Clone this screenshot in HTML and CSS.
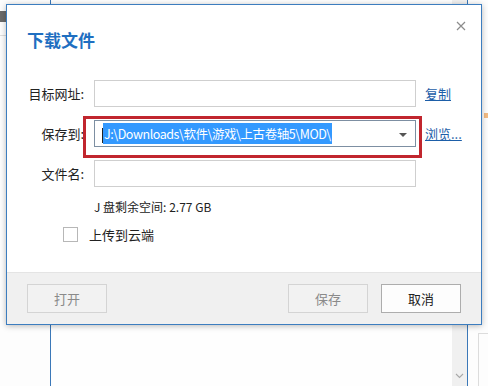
FILE: index.html
```html
<!DOCTYPE html>
<html lang="zh-CN">
<head>
<meta charset="utf-8">
<link rel="stylesheet" href="styles.css">
</head>
<body>
<div class="desk">
  <div class="side-strip"></div>
  <div class="side-line"></div>
  <div class="back-window">
    <div class="back-scroll">
      <svg class="chev" width="9" height="6" viewBox="0 0 9 6"><path d="M1 1 L4.5 4.5 L8 1" stroke="#a8a8a8" stroke-width="1.1" fill="none"/></svg>
    </div>
  </div>
  <div class="right-line-h"></div>
  <div class="right-line-v"></div>
  <div class="orange-mark"></div>

  <div class="dialog">
    <div class="dlg-title">下载文件</div>
    <svg class="close" width="10" height="10" viewBox="0 0 10 10"><path d="M1 1 L9 9 M9 1 L1 9" stroke="#8c8c8c" stroke-width="1.2" fill="none"/></svg>

    <div class="form">
      <div class="row">
        <label class="lbl">目标网址:</label>
        <div class="field"></div>
        <a class="link">复制</a>
      </div>
      <div class="row">
        <label class="lbl">保存到:</label>
        <div class="field combo">
          <span class="caret"></span><span class="sel">J:\Downloads\软件\游戏\上古卷轴5\MOD\</span>
          <span class="arrow"></span>
        </div>
        <a class="link">浏览...</a>
      </div>
      <div class="row row-last">
        <label class="lbl">文件名:</label>
        <div class="field"></div>
      </div>
      <div class="space">J 盘剩余空间: 2.77 GB</div>
      <div class="check-row">
        <span class="checkbox"></span>
        <span class="check-label">上传到云端</span>
      </div>
    </div>

    <div class="red-box"></div>

    <div class="footer">
      <button class="btn dis">打开</button>
      <div class="grow"></div>
      <button class="btn dis">保存</button>
      <button class="btn primary">取消</button>
    </div>
  </div>
</div>
</body>
</html>
```

FILE: styles.css
```css
* { box-sizing: border-box; }
html, body {
  margin: 0;
  padding: 0;
  width: 488px;
  height: 386px;
  overflow: hidden;
  background: #fdfdfd;
  font-family: "Noto Sans CJK SC", "Noto Sans", sans-serif;
}
.desk {
  position: relative;
  width: 488px;
  height: 386px;
}
.side-strip {
  position: absolute;
  left: 0; top: 11px;
  width: 6px; height: 11px;
  background: #6a6a6a;
}
.side-line {
  position: absolute;
  left: 0; top: 35px;
  width: 6px; height: 1px;
  background: #dedede;
}
.back-window {
  position: absolute;
  left: 50px; top: -10px;
  width: 418px; height: 410px;
  border-left: 1px solid #3b78b8;
  border-right: 1px solid #3b78b8;
  background: #fefefe;
}
.back-scroll {
  position: absolute;
  right: 0; top: 0;
  width: 15px; height: 100%;
  background: #f0f0f0;
}
.chev {
  position: absolute;
  left: 3px; bottom: 21px;
}
.right-line-h {
  position: absolute;
  left: 478px; top: 333px;
  width: 10px; height: 1px;
  background: #dcdcdc;
}
.right-line-v {
  position: absolute;
  left: 478px; top: 333px;
  width: 1px; height: 60px;
  background: #dcdcdc;
}
.orange-mark {
  position: absolute;
  left: 484px; top: 113px;
  width: 4px; height: 5px;
  background: #f0a050;
  opacity: 0.7;
}

.dialog {
  position: absolute;
  left: 6px; top: 4px;
  width: 476px; height: 321px;
  border: 1px solid #3c7dbf;
  background: #ffffff;
  box-shadow: 0 1px 6px rgba(0, 0, 0, 0.28);
  display: flex;
  flex-direction: column;
}
.dlg-title {
  padding: 23px 0 0 20px;
  font-size: 17px;
  line-height: 24px;
  font-weight: bold;
  color: #1f6fc1;
}
.close {
  position: absolute;
  right: 15px; top: 16px;
}
.form {
  margin-top: 28px;
  display: flex;
  flex-direction: column;
}
.row {
  display: flex;
  align-items: center;
  height: 27px;
  margin-bottom: 13px;
}
.row-last { margin-bottom: 0; }
.lbl {
  width: 77px;
  text-align: right;
  font-size: 13px;
  color: #222;
  line-height: 27px;
}
.field {
  margin-left: 10px;
  width: 322px;
  height: 27px;
  border: 1px solid #cfcfcf;
  background: #fff;
}
.combo {
  border-color: #7d8fa2;
  position: relative;
  display: flex;
  align-items: center;
  padding-left: 7px;
}
.caret {
  width: 1px;
  height: 15px;
  background: #222;
  margin-top: 4px;
}
.sel {
  background: #3399ff;
  color: #fff;
  font-size: 12.5px;
  letter-spacing: -0.45px;
  line-height: 21px;
  padding: 0 1px 0 1px;
}
.arrow {
  position: absolute;
  right: 8px; top: 12px;
  width: 0; height: 0;
  border-left: 4px solid transparent;
  border-right: 4px solid transparent;
  border-top: 4px solid #555;
}
.link {
  margin-left: 9px;
  font-size: 13px;
  color: #1d5ea8;
  text-decoration: underline;
  cursor: pointer;
}
.space {
  margin: 10px 0 0 87px;
  font-size: 12px;
  line-height: 20px;
  color: #222;
}
.check-row {
  margin: 7px 0 0 56px;
  display: flex;
  align-items: center;
  height: 20px;
}
.checkbox {
  width: 15px;
  height: 15px;
  border: 1px solid #b7b7b7;
  background: #fff;
}
.check-label {
  margin-left: 11px;
  font-size: 13px;
  color: #222;
}
.red-box {
  position: absolute;
  left: 76px; top: 111px;
  width: 339px; height: 42px;
  border: 3px solid #c1262e;
}
.footer {
  margin-top: auto;
  height: 52px;
  border-top: 1px solid #e4e4e4;
  background: #f0f0f0;
  display: flex;
  align-items: flex-start;
  padding: 11px 20px 0 20px;
  gap: 13px;
}
.grow { flex: 1; }
.btn {
  width: 80px;
  height: 29px;
  font-family: "Noto Sans CJK SC", sans-serif;
  font-size: 13px;
  border: 1px solid #d4d4d4;
  background: #f2f2f2;
  color: #8a8a8a;
  padding: 0;
}
.btn.primary {
  border-color: #adadad;
  background: #fdfdfd;
  color: #222;
}
```
